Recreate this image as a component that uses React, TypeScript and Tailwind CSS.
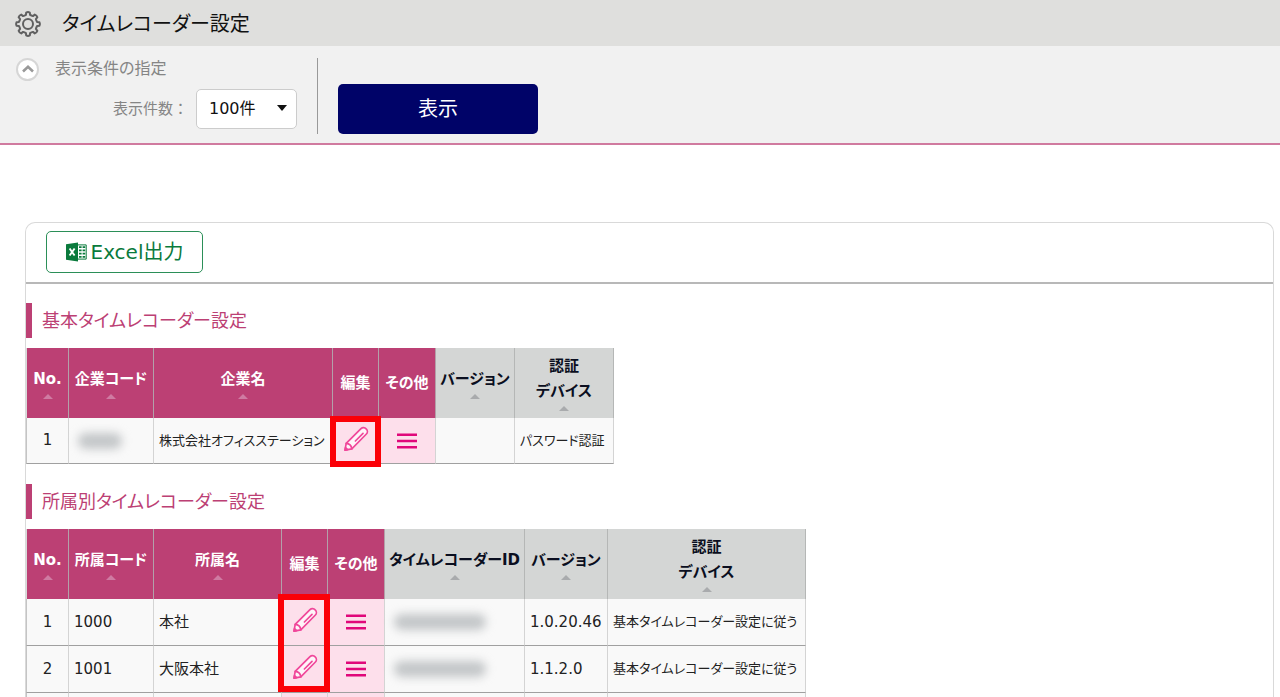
import React from "react";

type Header = { label: string[]; width: string; sortable: boolean; tone: "pink" | "gray" };

const pink = (label: string, width: string, sortable = true): Header => ({ label: [label], width, sortable, tone: "pink" });
const gray = (label: string[], width: string): Header => ({ label, width, sortable: true, tone: "gray" });

const companyHeaders: Header[] = [
  pink("No.", "w-[43px]"),
  pink("企業コード", "w-[85px]"),
  pink("企業名", "w-[179px]"),
  pink("編集", "w-[46px]", false),
  pink("その他", "w-[57px]", false),
  gray(["バージョン"], "w-[79px]"),
  gray(["認証", "デバイス"], "w-[99px]"),
];

const groupHeaders: Header[] = [
  pink("No.", "w-[43px]"),
  pink("所属コード", "w-[85px]"),
  pink("所属名", "w-[128px]"),
  pink("編集", "w-[46px]", false),
  pink("その他", "w-[57px]", false),
  gray(["タイムレコーダーID"], "w-[140px]"),
  gray(["バージョン"], "w-[83px]"),
  gray(["認証", "デバイス"], "w-[198px]"),
];

const groups = [
  { no: "1", code: "1000", name: "本社", version: "1.0.20.46", device: "基本タイムレコーダー設定に従う" },
  { no: "2", code: "1001", name: "大阪本社", version: "1.1.2.0", device: "基本タイムレコーダー設定に従う" },
];

function GearIcon() {
  const teeth = Array.from({ length: 8 }, (_, i) => {
    const at = (r: number, deg: number) => {
      const a = ((i * 45 + deg) * Math.PI) / 180;
      return `${(14 + r * Math.sin(a)).toFixed(2)} ${(14 - r * Math.cos(a)).toFixed(2)}`;
    };
    return `${i ? "L" : "M"}${at(9.3, -13)} L${at(11.6, -9)} Q${at(12.4, 0)} ${at(11.6, 9)} L${at(9.3, 13)} Q${at(8.9, 22)} ${at(9.3, 32)}`;
  }).join(" ");
  return (
    <svg className="size-7 text-[#606060]" viewBox="0 0 28 28" fill="none" stroke="currentColor" strokeWidth="2" strokeLinejoin="round" aria-hidden="true">
      <path d={teeth + " Z"} />
      <circle cx="14" cy="14" r="5" />
    </svg>
  );
}

function ExcelIcon() {
  return (
    <svg className="h-5 w-[21px]" viewBox="0 0 21 20" aria-hidden="true">
      <path d="M0 2.2 L12 0.4 V19.6 L0 17.8 Z" fill="#0a7a3c" />
      <path d="M12 2.9 H20.2 V17.1 H12" fill="#fff" stroke="#0a7a3c" strokeWidth="1" />
      <path d="M13 5.2 H19.2 M13 8.4 H19.2 M13 11.6 H19.2 M13 14.8 H19.2" stroke="#0a7a3c" strokeWidth="1.7" strokeDasharray="2.6 1" />
      <path d="M3.6 6.5 L8.6 13.5 M8.6 6.5 L3.6 13.5" stroke="#fff" strokeWidth="1.9" />
    </svg>
  );
}

function PencilIcon() {
  return (
    <svg className="size-[26px]" viewBox="0 0 26 26" fill="none" stroke="#f0479a" strokeWidth="1.7" strokeLinejoin="round" strokeLinecap="round" aria-hidden="true">
      <path d="M2 24.2 L3.2 17.4 L18 2.6 C19.4 1.2 21.8 1.3 23.2 2.8 C24.7 4.3 24.8 6.6 23.4 8 L8.8 22.8 Z" fill="#fff4f9" />
      <path d="M3.2 17.4 C6.2 17.6 8.4 19.8 8.8 22.8 M12.4 15 L20 7.4" />
      <path d="M2 24.2 L2.5 21.6 L4.6 23.7 Z" fill="#f0479a" />
    </svg>
  );
}

function MenuIcon() {
  return (
    <svg className="h-4 w-5" viewBox="0 0 20 16" stroke="#e0077a" strokeWidth="2.6" aria-hidden="true">
      <path d="M0 1.8 H20 M0 8 H20 M0 14.2 H20" />
    </svg>
  );
}

function HeadRow({ headers }: { headers: Header[] }) {
  return (
    <thead>
      <tr className="h-[70px]">
        {headers.map((h) => (
          <th
            key={h.label.join("")}
            scope="col"
            className={
              h.tone === "pink"
                ? `${h.width} border-r border-[#b3a0a9] bg-[#bc4074] p-0 align-middle text-white first:border-l first:border-l-[#d9d9d9]`
                : `${h.width} border-r border-[#b5b7b6] bg-[#d4d6d5] p-0 align-middle text-[#0a0e20]`
            }
          >
            <div className="flex flex-col items-center text-[15px] leading-[25px] font-bold">
              {h.label.map((line) => (
                <span key={line}>{line}</span>
              ))}
              {h.sortable && (
                <svg
                  className={h.tone === "pink" ? "mt-0.5 mb-px h-[5px] w-2.5 fill-[#cf7ba2]" : "mt-0.5 mb-px h-[5px] w-2.5 fill-[#a9abad]"}
                  viewBox="0 0 10 5"
                  aria-hidden="true"
                >
                  <path d="M5 0 L10 5 H0 Z" />
                </svg>
              )}
            </div>
          </th>
        ))}
      </tr>
    </thead>
  );
}

function Cell({ children, className = "px-[5px]" }: { children?: React.ReactNode; className?: string }) {
  return (
    <td className={`border-r border-b border-r-[#d4d4d4] border-b-[#a0a0a0] py-0 align-middle first:border-l first:border-l-[#c4c4c4] ${className}`}>
      {children}
    </td>
  );
}

function EditCell({ mark }: { mark?: string }) {
  return (
    <Cell className="relative bg-[#fddfeb] p-0">
      <button type="button" aria-label="編集" className="mx-auto mb-1 block">
        <PencilIcon />
      </button>
      {mark && <div className={`pointer-events-none absolute z-10 border-6 border-[#fb0007] ${mark}`} />}
    </Cell>
  );
}

function MenuCell() {
  return (
    <Cell className="bg-[#fddfeb] p-0">
      <button type="button" aria-label="その他" className="mx-auto block">
        <MenuIcon />
      </button>
    </Cell>
  );
}

function SectionTitle({ children }: { children: React.ReactNode }) {
  return <h2 className="flex h-[35px] items-center border-l-6 border-[#bc4074] pl-2.5 text-[18px] text-[#bc4074]">{children}</h2>;
}

export default function App() {
  return (
    <div className="h-screen overflow-hidden bg-white font-['DejaVu_Sans','Noto_Sans_CJK_JP',sans-serif] [font-feature-settings:'palt'] whitespace-nowrap text-[#222]">
      <header className="flex h-[46px] items-center gap-5 bg-[#dfdfdd] pt-0.5 pl-3.5">
        <GearIcon />
        <h1 className="text-[20px] text-[#111]">タイムレコーダー設定</h1>
      </header>

      <form className="flex h-[99px] border-b-2 border-[#d07a9f] bg-[#f1f1f1] pt-3" onSubmit={(e) => e.preventDefault()}>
        <div className="h-[76px] w-[318px] border-r border-[#999] pl-4">
          <div className="flex h-[22px] items-center gap-4 text-[16px] text-[#858585]">
            <button type="button" aria-label="表示条件を閉じる" className="flex size-[23px] items-center justify-center rounded-full border-2 border-[#d6d6d6] bg-white">
              <svg className="h-2 w-3" viewBox="0 0 12 8" fill="none" stroke="#999" strokeWidth="2.6" aria-hidden="true">
                <path d="M1 6.5 L6 1.8 L11 6.5" />
              </svg>
            </button>
            <span>表示条件の指定</span>
          </div>
          <div className="mt-[9px] mr-5 flex items-center justify-end gap-2">
            <label htmlFor="count" className="text-[15px] text-[#858585] [font-feature-settings:normal]">
              表示件数：
            </label>
            <div className="relative">
              <select id="count" className="h-10 w-[101px] appearance-none rounded-[5px] border border-[#ccc] bg-white pl-3 text-[16px] text-[#111]">
                <option>100件</option>
              </select>
              <svg className="pointer-events-none absolute top-4 right-2.5 h-1.5 w-2.5 fill-[#111]" viewBox="0 0 10 6" aria-hidden="true">
                <path d="M0 0 H10 L5 6 Z" />
              </svg>
            </div>
          </div>
        </div>
        <button type="submit" className="mt-[26px] ml-5 h-[50px] w-[200px] rounded-[5px] bg-[#000368] text-[20px] text-white">
          表示
        </button>
      </form>

      <main className="mt-[77px] mr-1.5 ml-[25px] rounded-t-[10px] border border-b-0 border-[#d9d9d9] pb-10">
        <div className="flex h-[61px] items-start border-b-2 border-[#b8b8b8] pt-2 pl-5">
          <button type="button" className="flex h-[42px] w-[157px] items-center justify-center gap-1 rounded-[5px] border border-[#2b8f58] bg-white text-[20px] text-[#0a7a3c]">
            <ExcelIcon />
            Excel出力
          </button>
        </div>

        <div className="flex flex-col gap-5 pt-[19px]">
          <section>
            <SectionTitle>基本タイムレコーダー設定</SectionTitle>
            <table className="mt-2.5 w-[588px] table-fixed border-separate border-spacing-0 text-[15px]">
              <HeadRow headers={companyHeaders} />
              <tbody>
                <tr className="h-[46px] bg-[#f9f9f9]">
                  <Cell className="px-1 text-center">1</Cell>
                  <Cell>
                    <span className="ml-1 block h-4 w-11 rounded-full bg-[#c3c6c8] blur-[5px]" />
                  </Cell>
                  <Cell className="px-[5px] text-[13px]">株式会社オフィスステーション</Cell>
                  <EditCell mark="-top-0.5 -left-[3px] h-[51px] w-[51px]" />
                  <MenuCell />
                  <Cell />
                  <Cell className="px-[5px] text-[13px]">パスワード認証</Cell>
                </tr>
              </tbody>
            </table>
          </section>

          <section>
            <SectionTitle>所属別タイムレコーダー設定</SectionTitle>
            <table className="mt-2.5 w-[780px] table-fixed border-separate border-spacing-0 text-[15px]">
              <HeadRow headers={groupHeaders} />
              <tbody>
                {groups.map((g, i) => (
                  <tr key={g.no} className="h-[47px] bg-[#f9f9f9]">
                    <Cell className="px-1 text-center">{g.no}</Cell>
                    <Cell>{g.code}</Cell>
                    <Cell>{g.name}</Cell>
                    <EditCell mark={i === 0 ? "-top-[5px] -left-[4px] h-[98px] w-[52px]" : undefined} />
                    <MenuCell />
                    <Cell>
                      <span className="ml-1 block h-4 w-[92px] rounded-full bg-[#c3c6c8] blur-[5px]" />
                    </Cell>
                    <Cell>{g.version}</Cell>
                    <Cell className="px-[5px] text-[13px]">{g.device}</Cell>
                  </tr>
                ))}
                <tr className="h-[47px] bg-[#f9f9f9]">
                  <Cell />
                  <Cell />
                  <Cell />
                  <EditCell />
                  <MenuCell />
                  <Cell />
                  <Cell />
                  <Cell />
                </tr>
              </tbody>
            </table>
          </section>
        </div>
      </main>
    </div>
  );
}
